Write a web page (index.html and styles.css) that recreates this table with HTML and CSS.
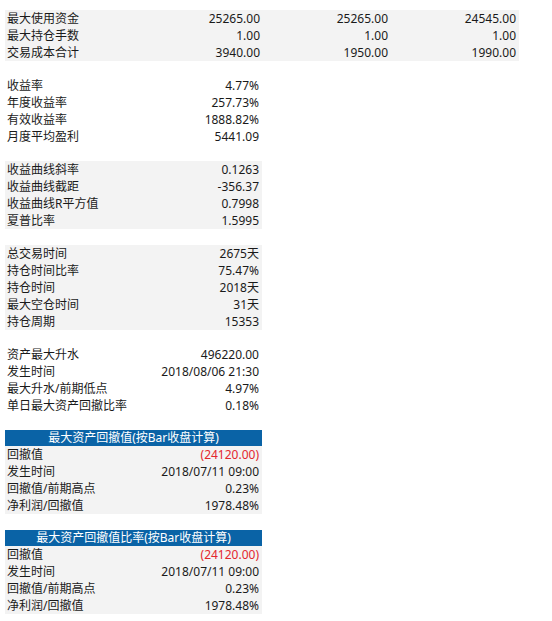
FILE: index.html
```html
<!DOCTYPE html>
<html lang="zh-CN">
<head>
<meta charset="utf-8">
<link rel="stylesheet" href="styles.css">
</head>
<body>
<div class="sheet">
  <div class="block wide gray">
    <div class="row"><span class="lab">最大使用资金</span><span class="val">25265.00</span><span class="val col">25265.00</span><span class="val col">24545.00</span></div>
    <div class="row"><span class="lab">最大持仓手数</span><span class="val">1.00</span><span class="val col">1.00</span><span class="val col">1.00</span></div>
    <div class="row"><span class="lab">交易成本合计</span><span class="val">3940.00</span><span class="val col">1950.00</span><span class="val col">1990.00</span></div>
  </div>
  <div class="block">
    <div class="row"><span class="lab">收益率</span><span class="val">4.77%</span></div>
    <div class="row"><span class="lab">年度收益率</span><span class="val">257.73%</span></div>
    <div class="row"><span class="lab">有效收益率</span><span class="val">1888.82%</span></div>
    <div class="row"><span class="lab">月度平均盈利</span><span class="val">5441.09</span></div>
  </div>
  <div class="block gray">
    <div class="row"><span class="lab">收益曲线斜率</span><span class="val">0.1263</span></div>
    <div class="row"><span class="lab">收益曲线截距</span><span class="val">-356.37</span></div>
    <div class="row"><span class="lab">收益曲线R平方值</span><span class="val">0.7998</span></div>
    <div class="row"><span class="lab">夏普比率</span><span class="val">1.5995</span></div>
  </div>
  <div class="block gray">
    <div class="row"><span class="lab">总交易时间</span><span class="val">2675天</span></div>
    <div class="row"><span class="lab">持仓时间比率</span><span class="val">75.47%</span></div>
    <div class="row"><span class="lab">持仓时间</span><span class="val">2018天</span></div>
    <div class="row"><span class="lab">最大空仓时间</span><span class="val">31天</span></div>
    <div class="row"><span class="lab">持仓周期</span><span class="val">15353</span></div>
  </div>
  <div class="block">
    <div class="row"><span class="lab">资产最大升水</span><span class="val">496220.00</span></div>
    <div class="row"><span class="lab">发生时间</span><span class="val">2018/08/06 21:30</span></div>
    <div class="row"><span class="lab">最大升水/前期低点</span><span class="val">4.97%</span></div>
    <div class="row"><span class="lab">单日最大资产回撤比率</span><span class="val">0.18%</span></div>
  </div>
  <div class="block gray">
    <div class="head">最大资产回撤值(按Bar收盘计算)</div>
    <div class="row"><span class="lab">回撤值</span><span class="val neg">(24120.00)</span></div>
    <div class="row"><span class="lab">发生时间</span><span class="val">2018/07/11 09:00</span></div>
    <div class="row"><span class="lab">回撤值/前期高点</span><span class="val">0.23%</span></div>
    <div class="row"><span class="lab">净利润/回撤值</span><span class="val">1978.48%</span></div>
  </div>
  <div class="block gray">
    <div class="head">最大资产回撤值比率(按Bar收盘计算)</div>
    <div class="row"><span class="lab">回撤值</span><span class="val neg">(24120.00)</span></div>
    <div class="row"><span class="lab">发生时间</span><span class="val">2018/07/11 09:00</span></div>
    <div class="row"><span class="lab">回撤值/前期高点</span><span class="val">0.23%</span></div>
    <div class="row"><span class="lab">净利润/回撤值</span><span class="val">1978.48%</span></div>
  </div>
</div>
</body>
</html>
```

FILE: styles.css
```css
* { box-sizing: border-box; }
html, body { margin: 0; padding: 0; background: #ffffff; }
.sheet {
  padding: 10px 0 0 5px;
  font-family: "Noto Sans", "Noto Sans CJK SC", sans-serif;
  font-size: 12px;
  color: #1a1a1a;
}
.block { width: 257px; margin-bottom: 16px; }
.block.wide { width: 514px; }
.gray { background: #f3f3f3; }
.row { display: flex; height: 17px; line-height: 17px; white-space: nowrap; }
.lab { flex: 1; padding-left: 2px; }
.val { text-align: right; padding-right: 3px; }
.col { width: 128px; }
.neg { color: #e3262e; }
.head {
  height: 16px;
  line-height: 16px;
  background: #0a63a6;
  color: #ffffff;
  text-align: center;
}
```
